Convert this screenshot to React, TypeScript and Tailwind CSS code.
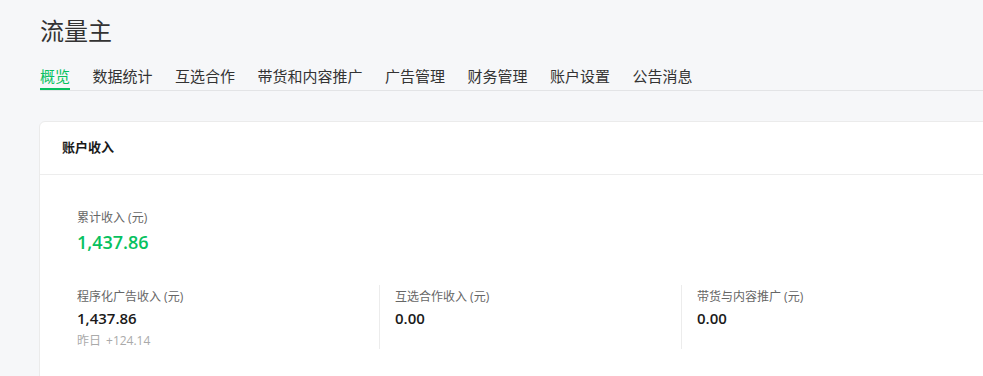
import React from 'react'

const TABS = ['概览', '数据统计', '互选合作', '带货和内容推广', '广告管理', '财务管理', '账户设置', '公告消息']

const STATS = [
  { label: '程序化广告收入 (元)', value: '1,437.86', sub: '+124.14' },
  { label: '互选合作收入 (元)', value: '0.00' },
  { label: '带货与内容推广 (元)', value: '0.00' },
]

export default function App() {
  return (
    <div
      className="w-[983px] h-[376px] overflow-hidden bg-[#f6f7f9] text-[#333]"
      style={{ fontFamily: '"Open Sans", "Noto Sans CJK SC", sans-serif' }}
    >
      <div className="w-[1300px] pl-[40px] pt-[16px]">
        {/* 标题 */}
        <h1 className="text-[24px] leading-[30px] font-normal text-[#333]">流量主</h1>

        {/* 标签 */}
        <nav className="mt-[18px] flex gap-[22.5px] border-b border-[#e3e4e6] h-[27px]">
          {TABS.map((tab, i) => (
            <div
              key={tab}
              className={`pb-px text-[15px] leading-[24px] border-b-2 ${
                i === 0 ? 'text-[#07c160] border-[#07c160]' : 'text-[#333] border-transparent'
              }`}
            >
              {tab}
            </div>
          ))}
        </nav>

        {/* 卡片 */}
        <div className="mt-[30px] -ml-px w-[1200px] bg-white border border-[#ebebeb] rounded-[6px]">
          <div className="pl-[22px] pt-[15px] pb-[17px] border-b border-[#ededed]">
            <div className="text-[13px] leading-[20px] font-bold text-[#1a1a1a]">账户收入</div>
          </div>

          <div className="pl-[37px] pt-[34px] pb-[40px]">
            <div className="text-[12px] leading-[18px] text-[#666]">累计收入 (元)</div>
            <div className="mt-[2px] text-[18px] leading-[26px] font-semibold text-[#07c160]">1,437.86</div>

            <div className="mt-[30px] flex">
              {STATS.map((s, i) => (
                <div
                  key={s.label}
                  className={`w-[302px] h-[64px] ${i > 0 ? 'border-l border-[#ececec] pl-[15px]' : ''}`}
                >
                  <div className="mt-[3px] text-[12px] leading-[18px] text-[#666]">{s.label}</div>
                  <div className="mt-px text-[15px] leading-[22px] font-semibold text-[#1a1a1a]">{s.value}</div>
                  {s.sub && (
                    <div className="mt-[3px] text-[12px] leading-[18px] text-[#aaa]">
                      昨日<span className="ml-[5px]">{s.sub}</span>
                    </div>
                  )}
                </div>
              ))}
            </div>
          </div>
        </div>
      </div>
    </div>
  )
}
